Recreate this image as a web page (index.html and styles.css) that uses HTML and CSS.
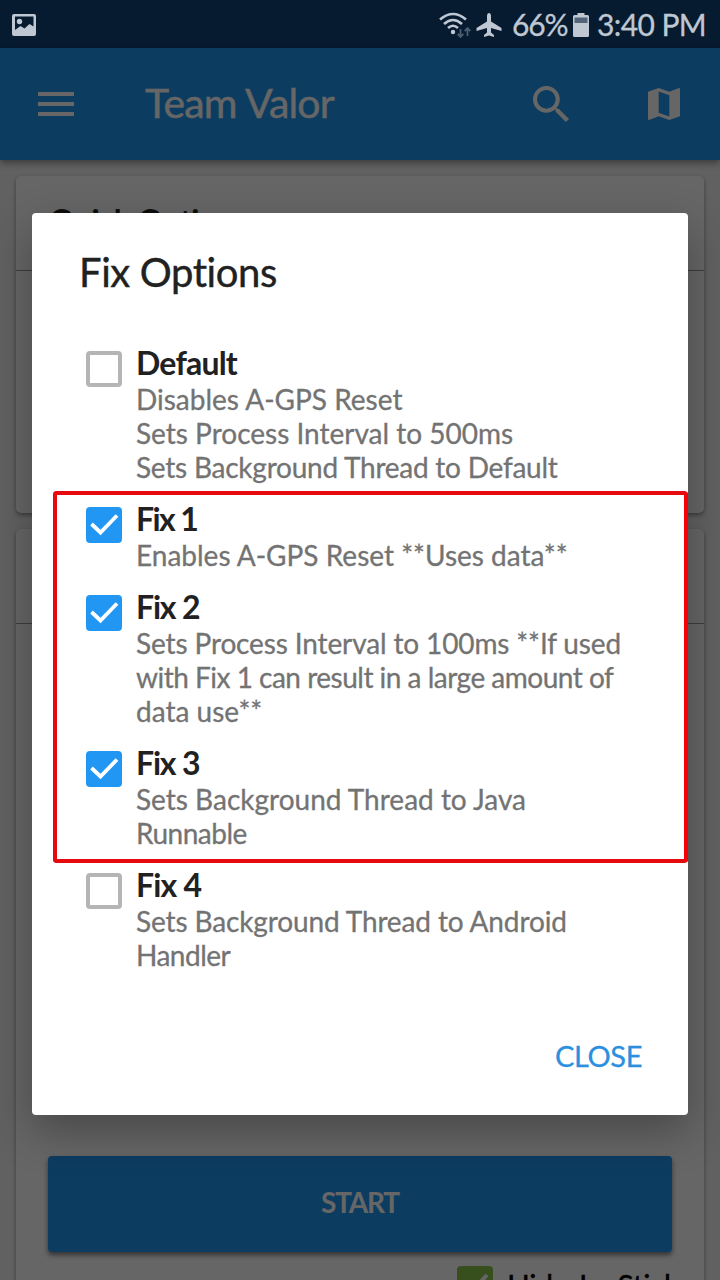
FILE: index.html
```html
<!DOCTYPE html>
<html lang="en">
<head>
<meta charset="utf-8">
<title>Team Valor</title>
<link rel="stylesheet" href="styles.css">
</head>
<body>
<div class="screen">
  <header class="status">
    <svg class="status-image" width="24" height="22" viewBox="0 0 24 22"><path fill="currentColor" fill-rule="evenodd" d="M2 0H22a2 2 0 0 1 2 2V20a2 2 0 0 1-2 2H2a2 2 0 0 1-2-2V2A2 2 0 0 1 2 0ZM3 2.500V16L8.500 12L12.500 14.500L17.500 10L21.500 12.500V2.500Z"/><circle fill="currentColor" cx="7.500" cy="7.500" r="2.700"/></svg>
    <div class="status-right">
      <svg width="32" height="26" viewBox="0 0 32 26" fill="none" stroke="currentColor" stroke-width="2.600"><path d="M1 7.500Q14-3.500 27 7.500M5 12Q14 4 23 12M9 16Q14 11.500 19 16"/><circle cx="14" cy="20" r="2.200" fill="currentColor" stroke="none"/><path class="dim" stroke-width="1.800" d="M21.500 17V25M18.700 22L21.500 24.900L24.300 22M28.500 24V16.500M25.700 19L28.500 16.100L31.300 19"/></svg>
      <svg class="plane" width="26" height="24" viewBox="0 0 26 24"><path fill="currentColor" d="M13 0C14 0 15 1.200 15 3V8.500L25.500 15V18L15 15V19.500L18 22V24L13 22.500L8 24V22L11 19.500V15L.5 18V15L11 8.500V3C11 1.200 12 0 13 0Z"/></svg>
      <span class="percent">66%</span>
      <svg class="battery" width="16" height="24" viewBox="0 0 16 24"><path fill="currentColor" d="M4.500 0H11.500V2H14.500Q16 2 16 3.500V22.500Q16 24 14.500 24H1.500Q0 24 0 22.500V3.500Q0 2 1.500 2H4.500Z"/><path fill="#53647a" d="M1.500 4.500H14.500V10H1.500Z"/></svg>
      <span class="clock">3:40 PM</span>
    </div>
  </header>
  <div class="app">
    <nav class="appbar">
      <svg class="menu" width="36" height="24" viewBox="0 0 36 24"><path fill="#fff" d="M0 0H36V4H0ZM0 10H36V14H0ZM0 20H36V24H0Z"/></svg>
      <span class="app-title">Team Valor</span>
      <svg class="search" width="36" height="36" viewBox="3 3 17.500 17.500"><path fill="#fff" d="M15.500 14h-.79l-.28-.27A6.471 6.471 0 0 0 16 9.500 6.500 6.500 0 1 0 9.500 16c1.610 0 3.090-.59 4.230-1.570l.27.28v.79l5 4.990L20.490 19l-4.990-5zm-6 0C7.010 14 5 11.990 5 9.500S7.010 5 9.500 5 14 7.010 14 9.500 11.990 14 9.500 14z"/></svg>
      <svg class="map" width="32" height="32" viewBox="3 3 18 18"><path fill="#fff" d="M20.500 3l-.16.03L15 5.100 9 3 3.360 4.900c-.21.070-.36.250-.36.480V20.500c0 .28.220.5.500.5l.16-.03L9 18.900l6 2.100 5.640-1.900c.21-.07.360-.25.360-.48V3.500c0-.28-.22-.5-.5-.5zM15 19l-6-2.110V5l6 2.110V19z"/></svg>
    </nav>
    <main class="cards">
      <section class="card quick">
        <h2 class="card-title">Quick Options</h2>
      </section>
      <section class="card actions">
        <h2 class="card-title"></h2>
        <div class="card-body">
          <button class="start"><span class="start-text">START</span></button>
          <div class="joystick">
            <span class="box green"><svg width="36" height="36" viewBox="0 0 36 36"><path fill="none" stroke="#fff" stroke-width="4" d="M6 18L14.500 25.500L30 9"/></svg></span>
            <span class="joy-label">Hide JoyStick</span>
          </div>
        </div>
      </section>
    </main>
    <div class="scrim"></div>
  </div>
  <div class="dialog">
    <h1 class="dialog-title">Fix Options</h1>
    <div class="options">
      <div class="option">
        <span class="box"></span>
        <div><h3 class="name">Default</h3><p class="desc">Disables A-GPS Reset<br>Sets Process Interval to 500ms<br><span class="snug">Sets Background Thread to Default</span></p></div>
      </div>
      <div class="marked">
        <div class="option">
          <span class="box on"><svg width="36" height="36" viewBox="0 0 36 36"><path fill="none" stroke="#fff" stroke-width="3.800" d="M5.500 17L14.500 25.500L31 8.500"/></svg></span>
          <div><h3 class="name tight-digit">Fix 1</h3><p class="desc">Enables A-GPS Reset **Uses data**</p></div>
        </div>
        <div class="option">
          <span class="box on"><svg width="36" height="36" viewBox="0 0 36 36"><path fill="none" stroke="#fff" stroke-width="3.800" d="M5.500 17L14.500 25.500L31 8.500"/></svg></span>
          <div><h3 class="name fix">Fix 2</h3><p class="desc"><span class="close-set">Sets Process Interval to 100ms **If used</span><br><span class="tight">with Fix 1 can result in a large amount of</span><br>data use**</p></div>
        </div>
        <div class="option">
          <span class="box on"><svg width="36" height="36" viewBox="0 0 36 36"><path fill="none" stroke="#fff" stroke-width="3.800" d="M5.500 17L14.500 25.500L31 8.500"/></svg></span>
          <div><h3 class="name fix">Fix 3</h3><p class="desc">Sets Background Thread to Java<br><span class="tight">Runnable</span></p></div>
        </div>
        <div class="outline"></div>
      </div>
      <div class="option">
        <span class="box"></span>
        <div><h3 class="name">Fix 4</h3><p class="desc"><span class="close-set">Sets Background Thread to Android</span><br><span class="tight">Handler</span></p></div>
      </div>
    </div>
    <div class="dialog-actions"><button class="close">CLOSE</button></div>
  </div>
</div>
</body>
</html>
```
FILE: styles.css
```css
* { box-sizing: border-box; margin: 0; padding: 0; }
body { font-family: Lato, "Open Sans", sans-serif; font-variant-ligatures: none; }
svg { display: block; flex: none; }
button { border: 0; background: none; font: inherit; }
.screen { position: relative; width: 720px; height: 1280px; overflow: hidden; display: flex; flex-direction: column; }
.status { height: 48px; flex: none; background: #061a30; color: #bfc8d2; display: flex; justify-content: space-between; align-items: center; padding: 2px 15px 0 12px; }
.status-right { display: flex; align-items: center; font-size: 30px; line-height: 36px; white-space: nowrap; -webkit-text-stroke: 0.3px currentColor; }
.dim { stroke: #4b5d72; }
.plane { margin-left: 5px; }
.percent { margin: 0 0 3px 10px; width: 56px; letter-spacing: -1.2px; }
.battery { margin-left: 5px; }
.clock { margin: 0 0 3px 8px; width: 108px; letter-spacing: -0.6px; }
.app { position: relative; flex: 1; display: flex; flex-direction: column; background: #f2f2f2; min-height: 0; }
.appbar { height: 112px; flex: none; background: #2196f3; box-shadow: 0 3px 7px rgba(0,0,0,.4); display: flex; align-items: center; padding: 0 40px 0 38px; z-index: 1; }
.app-title { margin: 0 0 3px 71px; width: 388px; font-size: 41px; letter-spacing: -0.8px; color: #fff; -webkit-text-stroke: 0.4px #fff; }
.map { margin-left: 79px; }
.cards { padding: 16px; display: flex; flex-direction: column; gap: 16px; }
.card { flex: none; background: #fff; border-radius: 5px; box-shadow: 0 2px 4px rgba(0,0,0,.4); }
.quick { height: 337px; }
.actions { height: 800px; }
.card-title { height: 95px; border-bottom: 1px solid #999; padding: 26px 33px 0; font-size: 32px; line-height: 38px; letter-spacing: -0.6px; color: #222; }
.card-body { padding: 532px 32px 0; }
.start { display: block; width: 624px; height: 96px; padding-bottom: 4px; background: #2196f3; border-radius: 4px; color: #fff; font-size: 28px; font-weight: 700; letter-spacing: -1.2px; box-shadow: 0 3px 5px rgba(0,0,0,.5); }
.joystick { display: flex; justify-content: flex-end; gap: 14px; margin-top: 14px; font-size: 30px; line-height: 38px; letter-spacing: -0.35px; white-space: nowrap; -webkit-text-stroke: 0.4px #000; }
.joy-label { width: 165px; }
.scrim { position: absolute; inset: 0; background: rgba(0,0,0,.6); z-index: 2; }
.dialog { position: absolute; z-index: 3; left: 32px; top: 213px; width: 656px; height: 902px; background: #fff; border-radius: 4px; box-shadow: 0 16px 44px rgba(0,0,0,.3); display: flex; flex-direction: column; }
.dialog-title { padding: 35px 47px 0; height: 131px; font-size: 40px; line-height: 48px; font-weight: 400; letter-spacing: -0.4px; color: #212121; -webkit-text-stroke: 0.4px #212121; }
.options { padding-left: 54px; }
.option { display: flex; gap: 14px; padding-bottom: 16px; }
.box { width: 36px; height: 36px; flex: none; margin-top: 7px; border: 4px solid #b5b5b5; border-radius: 4px; }
.on { border: 0; background: #2196f3; }
.green { border: 0; background: #8bc34a; margin-top: 0; }
.name { font-size: 32px; line-height: 38px; font-weight: 700; color: #212121; letter-spacing: -0.8px; }
.fix { letter-spacing: -1.2px; }
.tight-digit { letter-spacing: -1.6px; }
.desc { font-size: 28px; line-height: 34px; color: #737373; white-space: nowrap; -webkit-text-stroke: 0.3px #737373; }
.close-set { letter-spacing: -0.13px; }
.snug { letter-spacing: -0.24px; }
.tight { letter-spacing: -0.5px; }
.marked { position: relative; }
.outline { position: absolute; left: -33px; top: -9px; width: 635px; height: 372px; border: 4px solid #e60a0f; border-right-color: #f60206; border-radius: 4px; }
.dialog-actions { margin-top: auto; padding: 0 46px 40px 0; display: flex; justify-content: flex-end; }
.close { font-size: 29px; line-height: 38px; letter-spacing: -0.4px; color: #2b8fde; -webkit-text-stroke: 0.3px #2b8fde; }
```
